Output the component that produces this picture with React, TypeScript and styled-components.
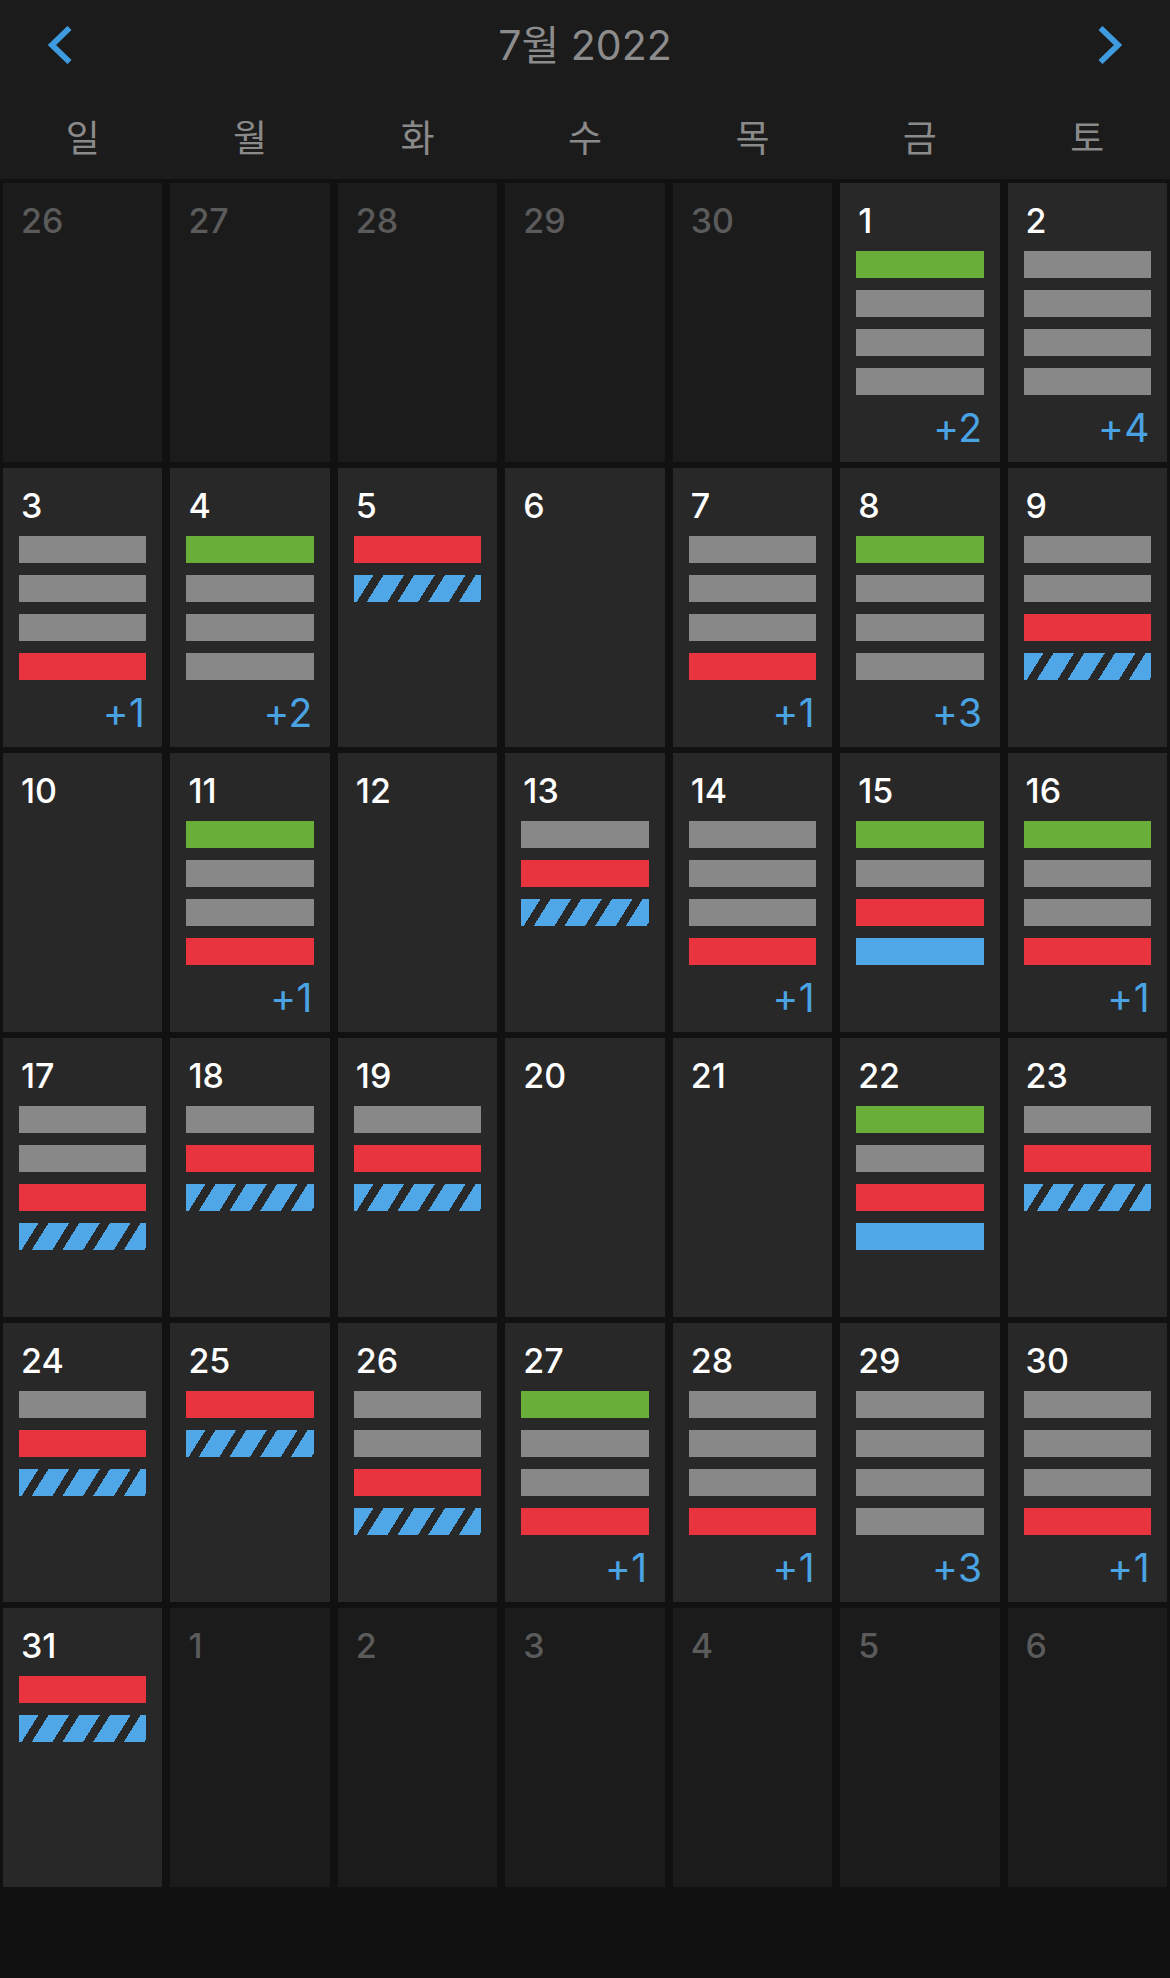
import React from 'react';
import styled, { createGlobalStyle } from 'styled-components';

type Kind = 'g' | 'n' | 'r' | 's' | 'b';

interface Day {
  n: number;
  current: boolean;
  bars: Kind[];
  more?: number;
}

const GlobalStyle = createGlobalStyle`
  html, body {
    margin: 0;
    padding: 0;
    background: #111111;
  }
  body {
    font-family: Inter, "Noto Sans CJK KR", sans-serif;
    -webkit-font-smoothing: antialiased;
  }
`;

const Page = styled.div`
  width: 1170px;
  min-height: 1978px;
  background: #111111;
  display: flex;
  flex-direction: column;
`;

const Header = styled.header`
  background: #1b1b1b;
  display: flex;
  flex-direction: column;
`;

const NavRow = styled.div`
  height: 90px;
  display: flex;
  align-items: center;
  justify-content: space-between;
  padding: 0 48px;
`;

const NavButton = styled.button`
  width: 24px;
  height: 38px;
  padding: 0;
  border: 0;
  background: transparent;
  display: flex;
  align-items: center;
  justify-content: center;
  cursor: pointer;
`;

const Title = styled.h1`
  margin: 0;
  font-size: 41px;
  line-height: 41px;
  font-weight: 400;
  color: #8c8c8c;
  font-family: Inter, "Noto Sans CJK KR", sans-serif;
`;

const WeekRow = styled.div`
  height: 89px;
  display: grid;
  grid-template-columns: repeat(7, 1fr);
  column-gap: 8px;
  padding: 4px 3px 0;
  box-sizing: border-box;
  align-items: center;
`;

const WeekLabel = styled.div`
  text-align: center;
  font-family: "Noto Sans CJK KR", sans-serif;
  font-size: 37px;
  line-height: 37px;
  font-weight: 400;
  color: #8a8a8a;
`;

const Grid = styled.div`
  display: grid;
  grid-template-columns: repeat(7, 1fr);
  grid-auto-rows: 279px;
  gap: 6px 8px;
  padding: 4px 3px;
  background: #111111;
`;

const Cell = styled.div<{ $current: boolean }>`
  background: ${(p) => (p.$current ? '#282828' : '#1b1b1b')};
  display: flex;
  flex-direction: column;
  padding: 21px 16px 15px;
  min-width: 0;
`;

const DayNum = styled.div<{ $current: boolean }>`
  font-size: 34px;
  line-height: 34px;
  font-weight: 500;
  padding-left: 2px;
  color: ${(p) => (p.$current ? '#ffffff' : '#5b5b5b')};
`;

const Bars = styled.div`
  margin-top: 13px;
  display: flex;
  flex-direction: column;
  gap: 12px;
`;

const barBg: Record<Kind, string> = {
  g: '#69ae38',
  n: '#888888',
  r: '#e93440',
  b: '#4fa7e8',
  s: 'repeating-linear-gradient(122deg, #4fa7e8 0px, #4fa7e8 16.5px, #282828 16.5px, #282828 25px, #4fa7e8 25px, #4fa7e8 26.06px)',
};

const Bar = styled.div<{ $kind: Kind }>`
  height: 27px;
  background: ${(p) => barBg[p.$kind]};
`;

const More = styled.div`
  margin-top: auto;
  text-align: right;
  padding-right: 1px;
  font-size: 39px;
  line-height: 39px;
  font-weight: 400;
  letter-spacing: 0.5px;
  color: #4aa3e3;
`;

const Chevron: React.FC<{ dir: 'left' | 'right' }> = ({ dir }) => (
  <svg width="24" height="38" viewBox="0 0 24 38" aria-hidden="true">
    <polyline
      points={dir === 'left' ? '21.5,2 4,19 21.5,36' : '2.5,2 20,19 2.5,36'}
      fill="none"
      stroke="#3f9be0"
      strokeWidth="5.8"
      strokeLinecap="butt"
      strokeLinejoin="miter"
    />
  </svg>
);

const weekdays = ['일', '월', '화', '수', '목', '금', '토'];

const cur = (n: number, bars: Kind[], more?: number): Day => ({ n, current: true, bars, more });
const other = (n: number): Day => ({ n, current: false, bars: [] });

const days: Day[] = [
  other(26), other(27), other(28), other(29), other(30),
  cur(1, ['g', 'n', 'n', 'n'], 2),
  cur(2, ['n', 'n', 'n', 'n'], 4),

  cur(3, ['n', 'n', 'n', 'r'], 1),
  cur(4, ['g', 'n', 'n', 'n'], 2),
  cur(5, ['r', 's']),
  cur(6, []),
  cur(7, ['n', 'n', 'n', 'r'], 1),
  cur(8, ['g', 'n', 'n', 'n'], 3),
  cur(9, ['n', 'n', 'r', 's']),

  cur(10, []),
  cur(11, ['g', 'n', 'n', 'r'], 1),
  cur(12, []),
  cur(13, ['n', 'r', 's']),
  cur(14, ['n', 'n', 'n', 'r'], 1),
  cur(15, ['g', 'n', 'r', 'b']),
  cur(16, ['g', 'n', 'n', 'r'], 1),

  cur(17, ['n', 'n', 'r', 's']),
  cur(18, ['n', 'r', 's']),
  cur(19, ['n', 'r', 's']),
  cur(20, []),
  cur(21, []),
  cur(22, ['g', 'n', 'r', 'b']),
  cur(23, ['n', 'r', 's']),

  cur(24, ['n', 'r', 's']),
  cur(25, ['r', 's']),
  cur(26, ['n', 'n', 'r', 's']),
  cur(27, ['g', 'n', 'n', 'r'], 1),
  cur(28, ['n', 'n', 'n', 'r'], 1),
  cur(29, ['n', 'n', 'n', 'n'], 3),
  cur(30, ['n', 'n', 'n', 'r'], 1),

  cur(31, ['r', 's']),
  other(1), other(2), other(3), other(4), other(5), other(6),
];

export default function App() {
  return (
    <>
      <GlobalStyle />
      <Page>
        <Header>
          <NavRow>
            <NavButton aria-label="이전 달">
              <Chevron dir="left" />
            </NavButton>
            <Title>7월 2022</Title>
            <NavButton aria-label="다음 달">
              <Chevron dir="right" />
            </NavButton>
          </NavRow>
          <WeekRow>
            {weekdays.map((w) => (
              <WeekLabel key={w}>{w}</WeekLabel>
            ))}
          </WeekRow>
        </Header>
        <Grid>
          {days.map((d, i) => (
            <Cell key={i} $current={d.current}>
              <DayNum $current={d.current}>{d.n}</DayNum>
              {d.bars.length > 0 && (
                <Bars>
                  {d.bars.map((b, j) => (
                    <Bar key={j} $kind={b} />
                  ))}
                </Bars>
              )}
              {d.more ? <More>+{d.more}</More> : null}
            </Cell>
          ))}
        </Grid>
      </Page>
    </>
  );
}
